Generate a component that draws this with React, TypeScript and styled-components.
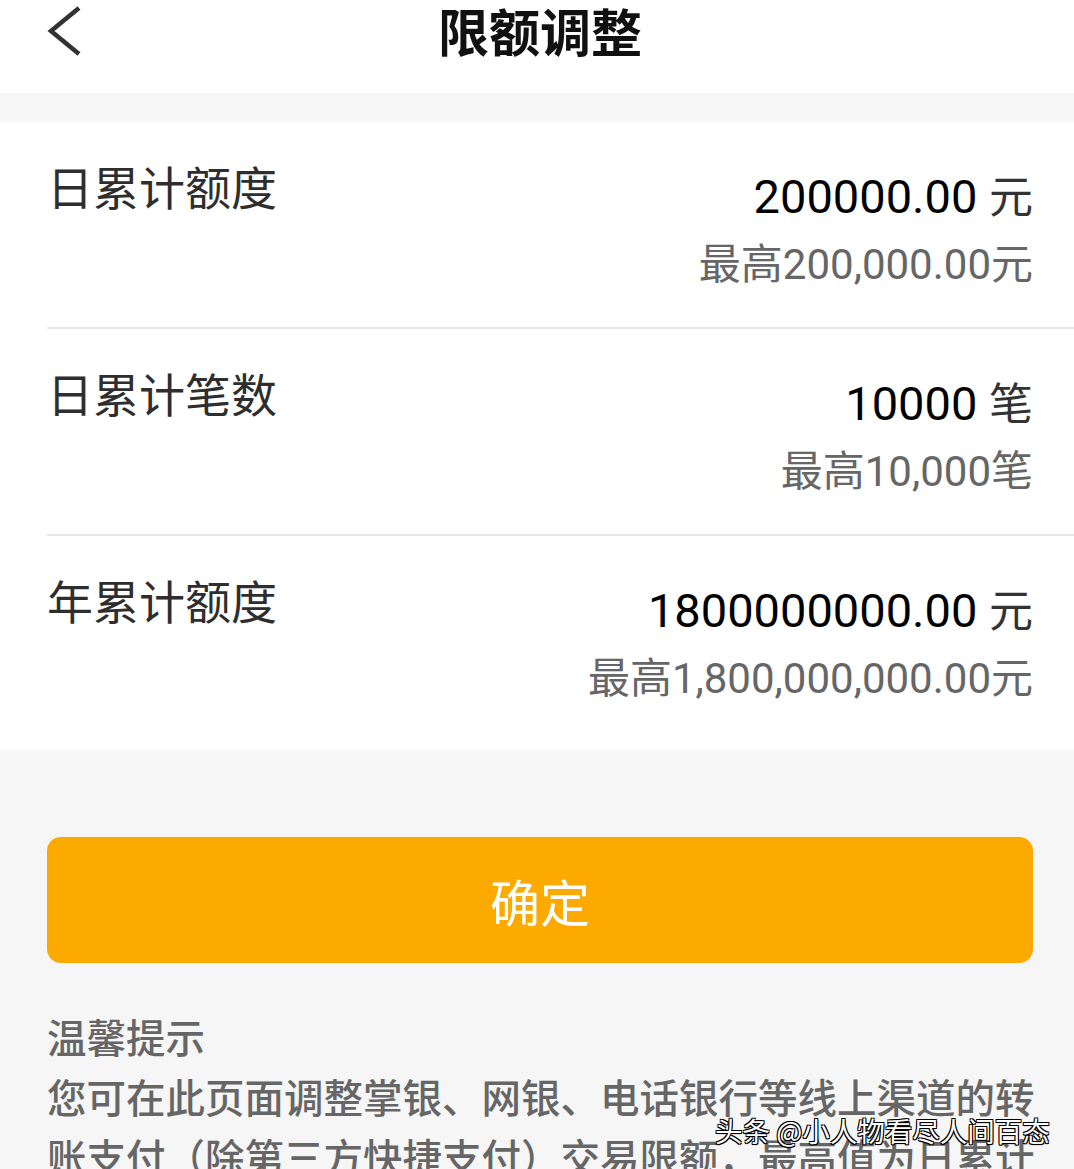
import React from "react";
import styled, { createGlobalStyle } from "styled-components";

const GlobalStyle = createGlobalStyle`
  html, body {
    margin: 0;
    padding: 0;
    background: #f6f6f6;
  }
  body {
    font-family: "Noto Sans CJK SC", "Noto Sans", sans-serif;
  }
`;

const Page = styled.div`
  position: relative;
  width: 1074px;
  height: 1169px;
  overflow: hidden;
  background: #f6f6f6;
`;

const Header = styled.div`
  height: 93px;
  background: #fff;
  display: grid;
  grid-template-columns: 1fr auto 1fr;
  align-items: start;
`;

const BackButton = styled.div`
  padding-left: 46px;
  padding-top: 5px;
  display: flex;
`;

const Title = styled.h1`
  margin: 0;
  font-size: 51px;
  line-height: 60px;
  font-weight: 700;
  color: #111;
  padding-left: 6px;
`;

const Card = styled.div`
  margin-top: 29px;
  background: #fff;
  padding-left: 47px;
  padding-bottom: 7px;
`;

const Row = styled.div<{ $last?: boolean }>`
  display: flex;
  justify-content: space-between;
  align-items: flex-start;
  height: ${(p) => (p.$last ? 207 : 205)}px;
  padding-right: 41px;
  border-bottom: ${(p) => (p.$last ? "none" : "2px solid #e8e8e8")};
`;

const Label = styled.div`
  margin-top: 36px;
  font-size: 46px;
  line-height: 54px;
  color: #2e2e2e;
`;

const Right = styled.div`
  margin-top: 44px;
  display: flex;
  flex-direction: column;
  align-items: flex-end;
`;

const Value = styled.div`
  font-family: Roboto, "Noto Sans CJK SC", sans-serif;
  font-size: 47px;
  line-height: 56px;
  color: #000;
`;

const Unit = styled.span`
  font-family: "Noto Sans CJK SC", sans-serif;
  color: #333;
  font-size: 44px;
`;

const Max = styled.div`
  margin-top: 15px;
  font-family: Roboto, "Noto Sans CJK SC", sans-serif;
  font-size: 42px;
  line-height: 50px;
  color: #666;
`;

const Footer = styled.div`
  padding: 87px 38px 0 47px;
`;

const ConfirmButton = styled.button`
  display: flex;
  align-items: center;
  justify-content: center;
  width: calc(100% - 3px);
  height: 126px;
  border: none;
  border-radius: 14px;
  background: #fca900;
  color: #fff;
  font-family: "Noto Sans CJK SC", sans-serif;
  font-size: 50px;
  cursor: pointer;
`;

const Tips = styled.div`
  margin-top: 43px;
  font-size: 39.5px;
  line-height: 60px;
  font-weight: 500;
  color: #666;
`;

const TipsTitle = styled.div``;

const TipsText = styled.p`
  margin: 0;
`;

const Watermark = styled.div`
  position: absolute;
  left: 715px;
  top: 1112px;
  font-size: 27.5px;
  line-height: 36px;
  color: #fff;
  white-space: nowrap;
  text-shadow: 1px 1px 0 #000, -1px -1px 0 #000, 1px -1px 0 #000, -1px 1px 0 #000,
    0 1px 1px #000;
`;

const limits = [
  { label: "日累计额度", value: "200000.00", unit: "元", max: "最高200,000.00元" },
  { label: "日累计笔数", value: "10000", unit: "笔", max: "最高10,000笔" },
  { label: "年累计额度", value: "1800000000.00", unit: "元", max: "最高1,800,000,000.00元" },
];

const App = () => {
  return (
    <>
      <GlobalStyle />
      <Page>
        <Header>
          <BackButton>
            <svg width="38" height="52" viewBox="0 0 38 52" fill="none">
              <path
                d="M33 3 L5 26 L33 49"
                stroke="#333"
                strokeWidth="4.5"
                strokeLinecap="butt"
                strokeLinejoin="miter"
              />
            </svg>
          </BackButton>
          <Title>限额调整</Title>
          <div />
        </Header>

        <Card>
          {limits.map((item, i) => (
            <Row key={item.label} $last={i === limits.length - 1}>
              <Label>{item.label}</Label>
              <Right>
                <Value>
                  {item.value} <Unit>{item.unit}</Unit>
                </Value>
                <Max>{item.max}</Max>
              </Right>
            </Row>
          ))}
        </Card>

        <Footer>
          <ConfirmButton>确定</ConfirmButton>
          <Tips>
            <TipsTitle>温馨提示</TipsTitle>
            <TipsText>
              您可在此页面调整掌银、网银、电话银行等线上渠道的转账支付（除第三方快捷支付）交易限额，最高值为日累计额度上限。
            </TipsText>
          </Tips>
        </Footer>

        <Watermark>头条 @小人物看尽人间百态</Watermark>
      </Page>
    </>
  );
};

export default App;
